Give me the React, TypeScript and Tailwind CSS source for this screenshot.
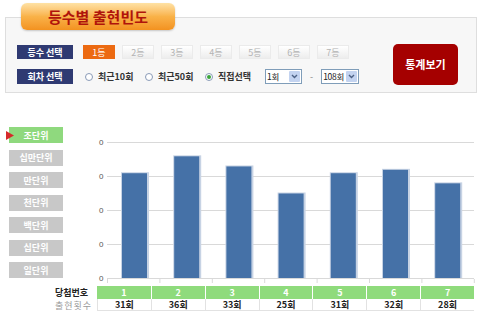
const ranks = ['1등', '2등', '3등', '4등', '5등', '6등', '7등'];
const units = ['조단위', '십만단위', '만단위', '천단위', '백단위', '십단위', '일단위'];
const counts = [31, 36, 33, 25, 31, 32, 28];
const radios = [
    { label: '최근10회', checked: false },
    { label: '최근50회', checked: false },
    { label: '직접선택', checked: true },
];

function Select({ value, width }: { value: string; width: string }) {
    return (
        <div className={`flex h-[15px] ${width} items-center justify-between border border-[#7f9db9] bg-white`}>
            <span className="pl-[1px] text-[8.5px] tracking-[-0.3px] whitespace-nowrap text-[#222]">{value}</span>
            <span className="mr-[1px] flex h-[11px] w-[11px] shrink-0 items-center justify-center rounded-[1px] bg-[#c3d3f0]">
                <svg width="7" height="5" viewBox="0 0 7 5">
                    <path d="M1 1 L3.5 3.5 L6 1" fill="none" stroke="#4d6185" strokeWidth="1.4" />
                </svg>
            </span>
        </div>
    );
}

function Chart() {
    const grid = [12, 46, 80, 114, 148];
    return (
        <svg width="390" height="155" className="mt-[3px] ml-[27px] block">
            {grid.map((y) => (
                <g key={y}>
                    <text x="9" y={y + 3} fontSize="8" fill="#555" fontFamily="Liberation Sans, sans-serif">0</text>
                    <line x1="17" x2="384" y1={y + 0.5} y2={y + 0.5} stroke="#d9d9d9" />
                </g>
            ))}
            {Array.from({ length: 8 }).map((_, k) => (
                <line key={k} x1={17.5 + 52.4 * k} x2={17.5 + 52.4 * k} y1="149" y2="153" stroke="#d9d9d9" />
            ))}
            {counts.map((v, i) => {
                const x = 32 + 52.2 * i;
                const h = v * 3.38;
                const y = 148 - h;
                return (
                    <g key={i}>
                        <rect x={x - 1} y={y - 1} width="28" height={h + 1} fill="#c7d3e4" />
                        <rect x={x} y={y} width="25" height={h} fill="#4571a7" />
                    </g>
                );
            })}
        </svg>
    );
}

export default function App() {
    return (
        <div className="h-[318px] w-[480px] overflow-hidden bg-white font-['Noto_Sans_CJK_KR',sans-serif] text-[9px] leading-none">
            <div className="pt-[3px]">
                <div className="relative z-10 ml-[21px] flex h-[27px] w-[154px] items-center justify-center rounded-[6px] bg-gradient-to-b from-[#fee2a4] via-[#f9b248] to-[#f3921f] text-[15px] font-bold text-[#b0140b] shadow-[0_1px_2px_rgba(0,0,0,0.2)]">
                    등수별 출현빈도
                </div>
                <div className="mx-[5px] -mt-[13px] flex h-[76px] w-[472px] items-start justify-between border border-[#dedede] bg-[#f7f7f7]">
                    <div className="flex flex-col pt-[27px] pl-[11px]">
                        <div className="flex items-center gap-[10px]">
                            <div className="flex h-[14px] w-[56px] items-center justify-center bg-[#2f3a72] font-bold text-white">등수 선택</div>
                            <div className="flex gap-[7px]">
                                {ranks.map((r, i) => (
                                    <div
                                        key={r}
                                        className={
                                            i === 0
                                                ? 'flex h-[14px] w-[32px] items-center justify-center bg-[#ec6a12] text-white'
                                                : 'flex h-[14px] w-[32px] items-center justify-center border border-[#ebebeb] bg-gradient-to-b from-white to-[#ededed] text-[#b3b3b3]'
                                        }
                                    >
                                        {r}
                                    </div>
                                ))}
                            </div>
                        </div>
                        <div className="mt-[10px] flex items-center">
                            <div className="flex h-[15px] w-[56px] items-center justify-center bg-[#2f3a72] font-bold text-white">회차 선택</div>
                            <div className="ml-[12px] flex">
                                {radios.map((r) => (
                                    <div key={r.label} className="flex w-[60px] items-center gap-[5px]">
                                        <span className="flex h-[8px] w-[8px] items-center justify-center rounded-full border border-[#8a9bb8] bg-white">
                                            {r.checked && <span className="h-[4px] w-[4px] rounded-full bg-[#3aa53a]" />}
                                        </span>
                                        <span className="font-bold text-[#333]">{r.label}</span>
                                    </div>
                                ))}
                            </div>
                            <Select value="1회" width="w-[37px]" />
                            <span className="mx-[8px] text-[#888]">-</span>
                            <Select value="108회" width="w-[38px]" />
                        </div>
                    </div>
                    <div className="mt-[26px] mr-[18px] flex h-[41px] w-[65px] items-center justify-center rounded-[5px] bg-[#a50000] text-[11px] font-bold text-white">
                        통계보기
                    </div>
                </div>
            </div>

            <div className="mt-[34px] flex items-start">
                <div className="ml-[9px] flex w-[54px] flex-col gap-[6.5px]">
                    {units.map((u, i) => (
                        <div
                            key={u}
                            className={`relative flex h-[16px] items-center justify-center font-bold text-white ${i === 0 ? 'bg-[#8fd97e]' : 'bg-[#c8c8c8]'}`}
                        >
                            {i === 0 && (
                                <svg width="8" height="9" viewBox="0 0 8 9" className="absolute top-[4px] -left-[3px]">
                                    <path d="M0 0 L8 4.5 L0 9 Z" fill="#d52a2a" />
                                </svg>
                            )}
                            {u}
                        </div>
                    ))}
                </div>
                <Chart />
            </div>

            <div className="mt-[1px] flex pl-[55px]">
                <div className="flex w-[42px] flex-col">
                    <div className="flex h-[13px] items-center font-bold text-[#222]">당첨번호</div>
                    <div className="flex h-[12px] items-center tracking-[1px] text-[#9a9a9a]">출현횟수</div>
                </div>
                <div className="grid w-[377px] grid-cols-7">
                    {counts.map((_, i) => (
                        <div key={i} className="flex h-[13px] items-center justify-center border-l border-white bg-[#8fdb7c] font-bold text-white first:border-l-0">
                            {i + 1}
                        </div>
                    ))}
                    {counts.map((c, i) => (
                        <div key={i} className="flex h-[12px] items-center justify-center border-b border-l border-[#e2e2e2] font-bold text-[#222] first:border-l-0">
                            {c}회
                        </div>
                    ))}
                </div>
            </div>
        </div>
    );
}
